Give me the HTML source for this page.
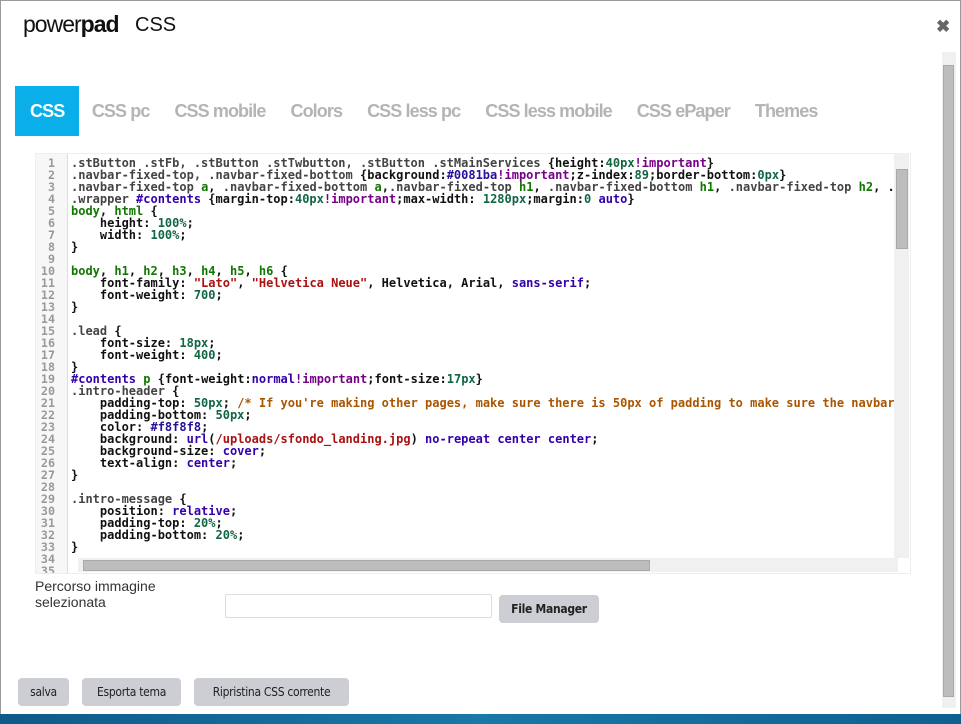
<!DOCTYPE html>
<html><head><meta charset="utf-8"><style>
body{margin:0;width:961px;height:724px;overflow:hidden;background:#fff;font-family:"Liberation Sans",sans-serif;position:relative}
.frame{position:absolute;left:0;top:0;width:959px;height:713px;border:1px solid #9a9a9a;border-bottom:none;background:#fff}
.bot{position:absolute;left:0;top:714px;width:961px;height:10px;background:linear-gradient(90deg,#0e5a8a,#1878a8,#0e6090)}
.logo{position:absolute;left:23px;top:11px;font-size:23px;letter-spacing:-1px;color:#111}
.logo b{font-weight:bold}
.ttl{position:absolute;left:135px;top:14px;font-size:20px;color:#111}
.x{position:absolute;left:936px;top:17px;font-size:17px;color:#666;font-weight:bold}
.vs{position:absolute;left:942px;top:52px;width:14px;height:656px;background:#f0f0f0}
.vs .t{position:absolute;left:1px;top:13px;width:11px;height:632px;background:#bdbdbd;border:1px solid #a9a9a9;box-sizing:border-box}
.tabs{position:absolute;left:15px;top:86px;height:50px;display:flex;font-weight:bold;font-size:18px;color:#b4b4b4;letter-spacing:-.9px}
.tabs span{padding:0 12.5px;line-height:50px}
.tabs .a{background:#0aaee8;color:#fff;padding:0 15px}
.ed{position:absolute;left:35px;top:153px;width:874px;height:419px;border:1px solid #eee;background:#fff;overflow:hidden}
.gut{position:absolute;left:0;top:0;width:31px;height:419px;background:#f7f7f7;border-right:1px solid #ddd}
pre{margin:0;font-family:"DejaVu Sans Mono",monospace;font-weight:bold;font-size:12px;line-height:12px;position:absolute;top:3px}
.ln{left:0;width:19px;text-align:right;color:#999;font-size:11.7px}
.cd{left:35px;color:#111}
.g{color:#170}.b{color:#30a}.n{color:#164}.k{color:#708}.s{color:#a11}.c{color:#a50}.at{color:#219}.q{color:#444}
.hs{position:absolute;left:42px;top:404px;width:820px;height:14px;background:#f0f0f0}
.hs .t{position:absolute;left:5px;top:2px;width:565px;height:9px;background:#bdbdbd;border:1px solid #a9a9a9}
.vs2{position:absolute;left:858px;top:0;width:15px;height:404px;background:#f0f0f0}
.vs2 .t{position:absolute;left:2px;top:15px;width:10px;height:78px;background:#bdbdbd;border:1px solid #a9a9a9}
.lbl{position:absolute;left:35px;top:578px;font-size:14px;line-height:16px;color:#333}
.inp{position:absolute;left:225px;top:594px;width:265px;height:22px;border:1px solid #ddd;border-radius:2px}
.btn{position:absolute;background:#ccced3;border-radius:4px;font-family:"DejaVu Sans Condensed","DejaVu Sans",sans-serif;font-size:12px;letter-spacing:-.3px;color:#222;text-align:center;height:28px;line-height:28px}
</style></head><body>
<div class="frame"></div>
<div class="bot"></div>
<div class="logo">power<b>pad</b></div>
<div class="ttl">CSS</div>
<div class="x">✖</div>
<div class="vs"><div class="t"></div></div>
<div class="tabs"><span class="a">CSS</span><span>CSS pc</span><span>CSS mobile</span><span>Colors</span><span>CSS less pc</span><span>CSS less mobile</span><span>CSS ePaper</span><span>Themes</span></div>
<div class="ed">
<div class="gut"><pre class="ln">1
2
3
4
5
6
7
8
9
10
11
12
13
14
15
16
17
18
19
20
21
22
23
24
25
26
27
28
29
30
31
32
33
34
35</pre></div>
<pre class="cd"><span class="q">.stButton .stFb, .stButton .stTwbutton, .stButton .stMainServices</span> {height:<span class="n">40px</span><span class="k">!important</span>}
<span class="q">.navbar-fixed-top, .navbar-fixed-bottom</span> {background:<span class="at">#0081ba</span><span class="k">!important</span>;z-index:<span class="n">89</span>;border-bottom:<span class="n">0px</span>}
<span class="q">.navbar-fixed-top</span> <span class="g">a</span>, <span class="q">.navbar-fixed-bottom</span> <span class="g">a</span>,<span class="q">.navbar-fixed-top</span> <span class="g">h1</span>, <span class="q">.navbar-fixed-bottom</span> <span class="g">h1</span>, <span class="q">.navbar-fixed-top</span> <span class="g">h2</span>, .
<span class="q">.wrapper</span> <span class="b">#contents</span> {margin-top:<span class="n">40px</span><span class="k">!important</span>;max-width: <span class="n">1280px</span>;margin:<span class="n">0</span> <span class="b">auto</span>}
<span class="g">body</span>, <span class="g">html</span> {
    height: <span class="n">100%</span>;
    width: <span class="n">100%</span>;
}

<span class="g">body</span>, <span class="g">h1</span>, <span class="g">h2</span>, <span class="g">h3</span>, <span class="g">h4</span>, <span class="g">h5</span>, <span class="g">h6</span> {
    font-family: <span class="s">"Lato"</span>, <span class="s">"Helvetica Neue"</span>, Helvetica, Arial, <span class="b">sans-serif</span>;
    font-weight: <span class="n">700</span>;
}

<span class="q">.lead</span> {
    font-size: <span class="n">18px</span>;
    font-weight: <span class="n">400</span>;
}
<span class="b">#contents</span> <span class="g">p</span> {font-weight:<span class="b">normal</span><span class="k">!important</span>;font-size:<span class="n">17px</span>}
<span class="q">.intro-header</span> {
    padding-top: <span class="n">50px</span>; <span class="c">/* If you're making other pages, make sure there is 50px of padding to make sure the navbar</span>
    padding-bottom: <span class="n">50px</span>;
    color: <span class="at">#f8f8f8</span>;
    background: <span class="b">url</span>(<span class="s">/uploads/sfondo_landing.jpg</span>) <span class="b">no-repeat</span> <span class="b">center</span> <span class="b">center</span>;
    background-size: <span class="b">cover</span>;
    text-align: <span class="b">center</span>;
}

<span class="q">.intro-message</span> {
    position: <span class="b">relative</span>;
    padding-top: <span class="n">20%</span>;
    padding-bottom: <span class="n">20%</span>;
}
</pre>
<div class="vs2"><div class="t"></div></div>
<div class="hs"><div class="t"></div></div>
</div>
<div class="lbl">Percorso immagine<br>selezionata</div>
<div class="inp"></div>
<div class="btn" style="left:499px;top:595px;width:100px;font-weight:bold">File Manager</div>
<div class="btn" style="left:18px;top:678px;width:51px">salva</div>
<div class="btn" style="left:82px;top:678px;width:99px">Esporta tema</div>
<div class="btn" style="left:194px;top:678px;width:155px">Ripristina CSS corrente</div>
</body></html>
